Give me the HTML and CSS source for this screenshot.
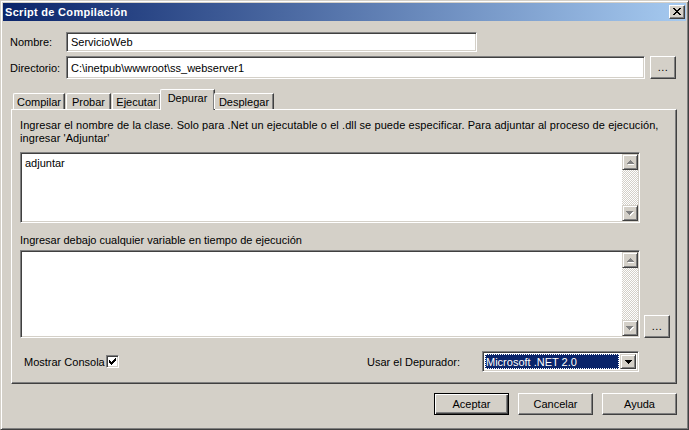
FILE: index.html
```html
<!DOCTYPE html>
<html lang="es">
<head>
<meta charset="utf-8">
<title>Script de Compilación</title>
<link rel="stylesheet" href="styles.css">
</head>
<body>
<div class="window">
  <div class="titlebar">
    <span class="title">Script de Compilación</span>
    <span class="close"><svg width="8" height="7" viewBox="0 0 8 7" shape-rendering="crispEdges"><path d="M0 0h2v1H0zM6 0h2v1H6zM1 1h2v1H1zM5 1h2v1H5zM2 2h4v1H2zM3 3h2v1H3zM2 4h4v1H2zM1 5h2v1H1zM5 5h2v1H5zM0 6h2v1H0zM6 6h2v1H6z" fill="#000"/></svg></span>
  </div>
  <div class="content">
    <div class="field field-name">
      <span class="lbl">Nombre:</span>
      <div class="input input-name">ServicioWeb</div>
    </div>
    <div class="field field-dir">
      <span class="lbl">Directorio:</span>
      <div class="input input-dir">C:\inetpub\wwwroot\ss_webserver1</div>
      <span class="btn btn-dots">...</span>
    </div>

    <div class="tabs">
      <span class="tab tab-compilar">Compilar</span>
      <span class="tab tab-probar">Probar</span>
      <span class="tab tab-ejecutar">Ejecutar</span>
      <span class="tab tab-active">Depurar</span>
      <span class="tab tab-desplegar">Desplegar</span>
    </div>

    <div class="panel">
      <p class="hint">Ingresar el nombre de la clase. Solo para .Net un ejecutable o el .dll se puede especificar. Para adjuntar al proceso de ejecución, ingresar 'Adjuntar'</p>
      <div class="textbox textbox-class">
        <div class="textbox-text">adjuntar</div>
        <div class="scrollbar">
          <span class="sb-btn"><svg width="7" height="5" viewBox="0 0 7 5" shape-rendering="crispEdges"><path d="M4 1h1v1h1v1h1v1h1v1H1V4h1V3h1V2h1z" fill="#fff"/><path d="M3 0h1v1h1v1h1v1h1v1H0V3h1V2h1V1h1z" fill="#808080"/></svg></span>
          <span class="sb-track"></span>
          <span class="sb-btn"><svg width="8" height="5" viewBox="0 0 8 5" shape-rendering="crispEdges"><path d="M1 1h7v1H7v1H6v1H5v1H4V4H3V3H2V2H1z" fill="#fff"/><path d="M0 0h7v1H6v1H5v1H4v1H3V3H2V2H1V1H0z" fill="#808080"/></svg></span>
        </div>
      </div>

      <p class="hint hint-vars">Ingresar debajo cualquier variable en tiempo de ejecución</p>
      <div class="vars-row">
        <div class="textbox textbox-vars">
          <div class="textbox-text"></div>
          <div class="scrollbar">
            <span class="sb-btn"><svg width="7" height="5" viewBox="0 0 7 5" shape-rendering="crispEdges"><path d="M4 1h1v1h1v1h1v1h1v1H1V4h1V3h1V2h1z" fill="#fff"/><path d="M3 0h1v1h1v1h1v1h1v1H0V3h1V2h1V1h1z" fill="#808080"/></svg></span>
            <span class="sb-track"></span>
            <span class="sb-btn"><svg width="8" height="5" viewBox="0 0 8 5" shape-rendering="crispEdges"><path d="M1 1h7v1H7v1H6v1H5v1H4V4H3V3H2V2H1z" fill="#fff"/><path d="M0 0h7v1H6v1H5v1H4v1H3V3H2V2H1V1H0z" fill="#808080"/></svg></span>
          </div>
        </div>
        <span class="btn btn-dots">...</span>
      </div>

      <div class="options">
        <span class="console">Mostrar Consola<span class="checkbox"><svg width="7" height="7" viewBox="0 0 7 7" shape-rendering="crispEdges"><path d="M6 0h1v1H6zM5 1h2v1H5zM0 2h1v1H0zM4 2h3v1H4zM0 3h2v1H0zM3 3h3v1H3zM0 4h5v1H0zM1 5h3v1H1zM2 6h1v1H2z" fill="#000"/></svg></span></span>
        <span class="debugger">
          <span class="debugger-label">Usar el Depurador:</span>
          <span class="combo">
            <span class="combo-value">Microsoft .NET 2.0</span>
            <span class="combo-btn"><svg width="7" height="4" viewBox="0 0 7 4" shape-rendering="crispEdges"><path d="M0 0h7v1H6v1H5v1H4v1H3V3H2V2H1V1H0z" fill="#000"/></svg></span>
          </span>
        </span>
      </div>
    </div>

    <div class="actions">
      <span class="btn btn-action btn-default">Aceptar</span>
      <span class="btn btn-action">Cancelar</span>
      <span class="btn btn-action">Ayuda</span>
    </div>
  </div>
</div>
</body>
</html>
```

FILE: styles.css
```css
* { box-sizing: border-box; }

html, body {
  margin: 0;
  padding: 0;
  background: #d4d0c8;
}

body {
  font-family: "Liberation Sans", Arial, sans-serif;
  font-size: 11px;
  color: #000;
}

.window {
  width: 689px;
  height: 430px;
  background: #d4d0c8;
  border: 1px solid;
  border-color: #d4d0c8 #404040 #404040 #d4d0c8;
  box-shadow: inset 1px 1px #fff, inset -1px -1px #808080;
  padding: 2px;
}

.titlebar {
  height: 18px;
  display: flex;
  align-items: center;
  padding-left: 2px;
  background: linear-gradient(to right, #0a246a, #a6caf0);
}

.title {
  color: #fff;
  font-weight: bold;
  font-size: 11px;
  letter-spacing: 0.3px;
}

.close {
  margin-left: auto;
  margin-right: 1px;
  width: 16px;
  height: 14px;
  display: flex;
  align-items: center;
  justify-content: center;
  background: #d4d0c8;
  border: 1px solid;
  border-color: #fff #404040 #404040 #fff;
  box-shadow: inset -1px -1px #808080;
  padding-bottom: 1px;
}

.content {
  padding: 0 9px 0 7px;
}

.field {
  display: flex;
  align-items: center;
}

.field-name { margin-top: 11px; }
.field-dir { margin-top: 4px; margin-right: 1px; }

.lbl {
  width: 56px;
  flex: none;
}

.input {
  background: #fff;
  border: 1px solid;
  border-color: #808080 #fff #fff #808080;
  box-shadow: inset 1px 1px #404040, inset -1px -1px #d4d0c8;
  display: flex;
  align-items: center;
  padding: 0 4px;
  white-space: nowrap;
}

.input-name { width: 411px; height: 20px; }
.input-dir { flex: 1; height: 23px; }

.btn {
  display: flex;
  align-items: center;
  justify-content: center;
  background: #d4d0c8;
  border: 1px solid;
  border-color: #fff #404040 #404040 #fff;
  box-shadow: inset -1px -1px #808080, inset 1px 1px #d4d0c8;
}

.btn-dots {
  width: 26px;
  height: 23px;
  margin-left: 5px;
  flex: none;
  padding-bottom: 2px;
  letter-spacing: 0.5px;
}

/* Tabs */
.tabs {
  margin-top: 10px;
  margin-left: 1px;
  padding-left: 2px;
  display: flex;
  align-items: flex-end;
  height: 20px;
  position: relative;
  z-index: 1;
}

.tab {
  height: 16px;
  flex: none;
  display: flex;
  align-items: center;
  justify-content: center;
  border-left: 1px solid #fff;
  border-top: 1px solid #fff;
  border-top-left-radius: 2px;
  border-right: 1px solid #404040;
  box-shadow: inset -1px 0 #808080;
  padding-top: 1px;
}

.tab-compilar { width: 52px; }
.tab-probar { width: 45px; margin-left: 1px; }
.tab-ejecutar { width: 49px; margin-left: 1px; }
.tab-desplegar { width: 60px; }

.tab-active {
  width: 55px;
  height: 21px;
  margin-bottom: -1px;
  margin-left: -1px;
  margin-right: -1px;
  padding: 0 0 4px 0;
  background: #d4d0c8;
}

/* Panel */
.panel {
  margin-left: 1px;
  border: 1px solid;
  border-color: #fff #404040 #404040 #fff;
  box-shadow: inset -1px -1px #808080;
  padding: 9px 6px 11px 8px;
}

.hint {
  margin: 0;
  line-height: 13px;
  padding-right: 4px;
  letter-spacing: 0.08px;
}

.hint-vars {
  margin-top: 11px;
  letter-spacing: 0;
}

.textbox {
  display: flex;
  background: #fff;
  border: 1px solid;
  border-color: #808080 #fff #fff #808080;
  box-shadow: inset 1px 1px #404040, inset -1px -1px #d4d0c8;
  padding: 1px;
}

.textbox-class {
  margin-top: 7px;
  height: 71px;
  margin-right: 30px;
}

.textbox-text {
  flex: 1;
  padding: 3px 3px;
  line-height: 13px;
}

.scrollbar {
  width: 16px;
  display: flex;
  flex-direction: column;
  flex: none;
}

.sb-btn {
  width: 16px;
  height: 16px;
  flex: none;
  display: flex;
  align-items: center;
  justify-content: center;
  background: #d4d0c8;
  border: 1px solid;
  border-color: #d4d0c8 #404040 #404040 #d4d0c8;
  box-shadow: inset 1px 1px #fff, inset -1px -1px #808080;
}

.sb-track {
  flex: 1;
  background: repeating-conic-gradient(#d4d0c8 0 25%, #fff 0 50%) 0 0 / 2px 2px;
}

.vars-row {
  margin-top: 3px;
  display: flex;
  align-items: flex-end;
}

.textbox-vars {
  flex: 1;
  height: 88px;
}

.vars-row .btn-dots {
  margin-left: 4px;
}

/* Options row */
.options {
  margin-top: 13px;
  margin-right: 31px;
  height: 21px;
  display: flex;
  align-items: center;
  justify-content: space-between;
}

.console {
  display: flex;
  align-items: center;
  padding-left: 4px;
}

.checkbox {
  width: 13px;
  height: 13px;
  margin-left: 1px;
  display: flex;
  align-items: center;
  justify-content: center;
  background: #fff;
  border: 1px solid;
  border-color: #808080 #fff #fff #808080;
  box-shadow: inset 1px 1px #404040, inset -1px -1px #d4d0c8;
}

.debugger {
  display: flex;
  align-items: center;
}

.debugger-label {
  margin-right: 22px;
}

.combo {
  width: 157px;
  height: 21px;
  display: flex;
  align-items: stretch;
  background: #fff;
  border: 1px solid;
  border-color: #808080 #fff #fff #808080;
  box-shadow: inset 1px 1px #404040, inset -1px -1px #d4d0c8;
  padding: 2px;
}

.combo-value {
  flex: 1;
  background: #0a246a;
  color: #fff;
  outline: 1px dotted #fff;
  outline-offset: -1px;
  display: flex;
  align-items: center;
  padding-left: 1px;
  margin-right: 1px;
}

.combo-btn {
  width: 16px;
  flex: none;
  display: flex;
  align-items: center;
  justify-content: center;
  background: #d4d0c8;
  border: 1px solid;
  border-color: #d4d0c8 #404040 #404040 #d4d0c8;
  box-shadow: inset 1px 1px #fff, inset -1px -1px #808080;
}

/* Bottom buttons */
.actions {
  margin-top: 9px;
  display: flex;
  justify-content: flex-end;
  gap: 9px;
}

.btn-action {
  width: 75px;
  height: 22px;
}

.btn-default {
  border-color: #000;
  box-shadow: inset 1px 1px #fff, inset -1px -1px #404040, inset -2px -2px #808080;
}
```
